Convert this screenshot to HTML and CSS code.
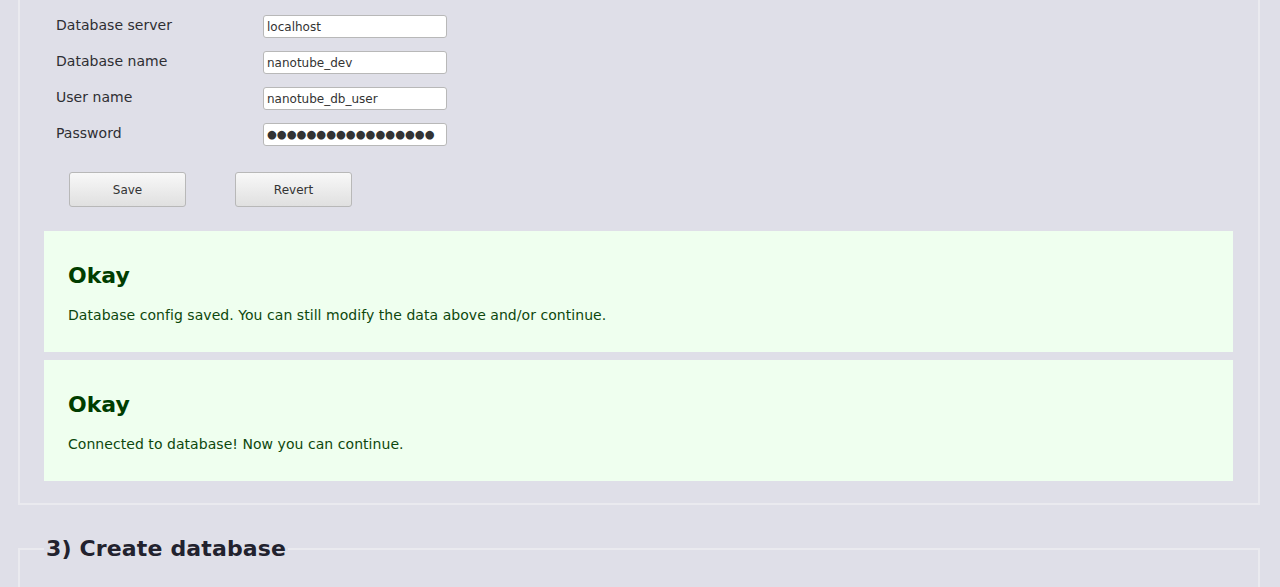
FILE: index.html
```html
<!DOCTYPE html>
<html>
<head>
<meta charset="utf-8">
<title>Install - Database</title>
<link rel="stylesheet" href="styles.css">
</head>
<body>
<div class="panel">
  <form class="db-form">
    <label class="lbl" for="srv">Database server</label>
    <input class="field" id="srv" type="text" value="localhost">
    <label class="lbl" for="dbn">Database name</label>
    <input class="field" id="dbn" type="text" value="nanotube_dev">
    <label class="lbl" for="usr">User name</label>
    <input class="field" id="usr" type="text" value="nanotube_db_user">
    <label class="lbl" for="pwd">Password</label>
    <input class="field field-secret" id="pwd" type="text" value="●●●●●●●●●●●●●●●●●">
  </form>
  <div class="actions">
    <button class="btn" type="button">Save</button>
    <button class="btn" type="button">Revert</button>
  </div>
  <div class="msg">
    <h3 class="msg-title">Okay</h3>
    <p class="msg-text">Database config saved. You can still modify the data above and/or continue.</p>
  </div>
  <div class="msg">
    <h3 class="msg-title">Okay</h3>
    <p class="msg-text">Connected to database! Now you can continue.</p>
  </div>
</div>
<fieldset class="step">
  <legend class="step-title">3) Create database</legend>
  <div class="step-body"></div>
</fieldset>
</body>
</html>
```
FILE: styles.css
```css
html, body {
  margin: 0;
  padding: 0;
  background: #dfdfe8;
  font-family: "DejaVu Sans", "Liberation Sans", sans-serif;
  color: #333;
}
body {
  padding: 0 20px 0 18px;
}
.panel {
  border: 2px solid #eaeaef;
  border-top: none;
  padding: 15px 25px 22px 24px;
}
.db-form {
  display: grid;
  grid-template-columns: 207px 184px;
  row-gap: 13px;
  margin: 0 0 0 12px;
}
.lbl {
  font-size: 14px;
  color: #2e2e33;
  padding-top: 2px;
  line-height: 16px;
  letter-spacing: 0.03px;
}
.field {
  box-sizing: border-box;
  height: 23px;
  width: 184px;
  margin: 0;
  border: 1px solid #b8b8b8;
  border-radius: 3px;
  background: #fff;
  padding: 0 3px;
  font-family: "DejaVu Sans", sans-serif;
  font-size: 12px;
  color: #333;
  outline: none;
}
.field-secret {
  font-size: 11.3px;
}
.actions {
  display: flex;
  gap: 49px;
  margin: 26px 0 24px 25px;
}
.btn {
  box-sizing: border-box;
  width: 117px;
  height: 35px;
  border: 1px solid #b8b8b8;
  border-radius: 3px;
  background: linear-gradient(#f8f8f8, #e0e0e0);
  font-family: "DejaVu Sans", sans-serif;
  font-size: 12px;
  color: #333;
  padding: 0;
}
.msg {
  background: #efffef;
  padding: 24px;
  margin-bottom: 8px;
}
.msg:last-child {
  margin-bottom: 0;
}
.msg-title {
  margin: 8px 0 18px;
  font-size: 22px;
  font-weight: bold;
  line-height: 26px;
  color: #003d00;
}
.msg-text {
  margin: 0 0 5px;
  font-size: 14px;
  line-height: 16px;
  color: #0d470d;
  letter-spacing: 0.05px;
}
.step {
  margin: 31px 0 0;
  border: 2px solid #eaeaef;
  padding: 0 25px 0 24px;
  min-height: 80px;
}
.step-title {
  padding: 0 2px;
  font-size: 22px;
  font-weight: bold;
  color: #22222e;
  letter-spacing: 0.15px;
}
```
